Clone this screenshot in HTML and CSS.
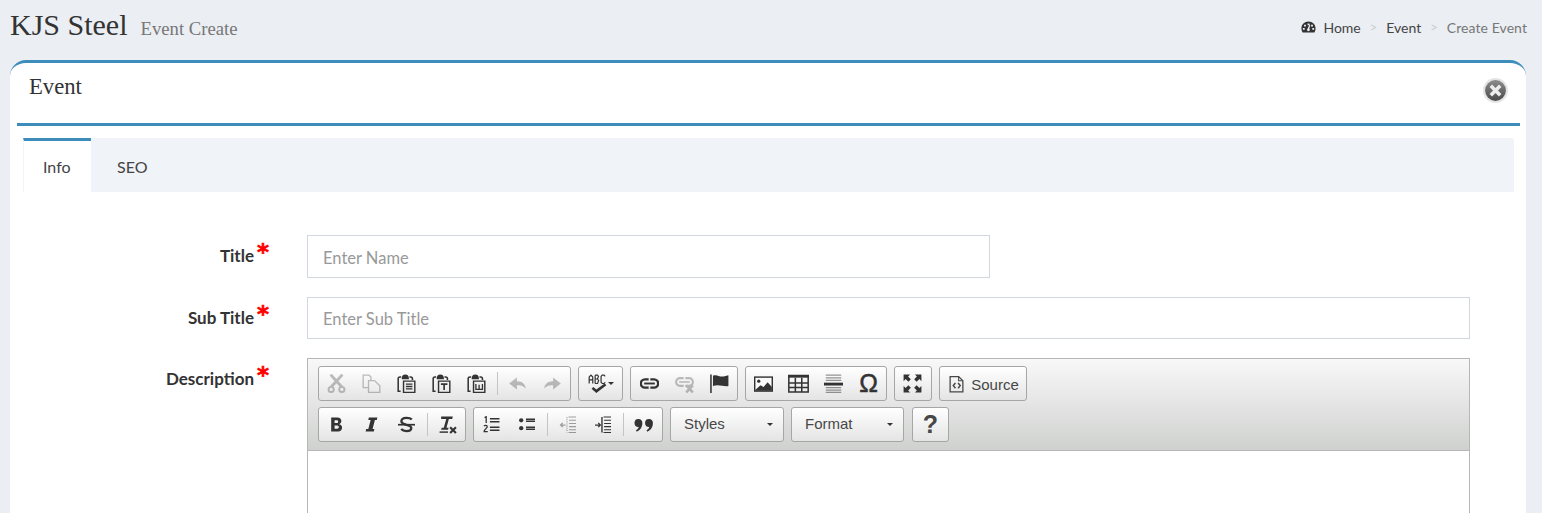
FILE: index.html
```html
<!DOCTYPE html>
<html lang="en">
<head>
<meta charset="utf-8">
<title>Event Create</title>
<link rel="stylesheet" href="styles.css">
</head>
<body>
<svg class="defs" width="0" height="0" aria-hidden="true">
  <symbol id="i-cut" viewBox="0 0 16 16"><path d="M3 0.5 L12.5 11 M13 0.5 L3.500 11" stroke="currentColor" stroke-width="2.4" fill="none"/><circle cx="3.500" cy="13" r="2.200" fill="none" stroke="currentColor" stroke-width="1.600"/><circle cx="12.500" cy="13" r="2.200" fill="none" stroke="currentColor" stroke-width="1.600"/></symbol>
  <symbol id="i-copy" viewBox="0 0 16 16"><path d="M6 11.500H1V1H6L7.500 2.500V5M5.500 5.500H10.500L15 10V15.500H5.500Z" fill="none" stroke="currentColor" stroke-width="1.100"/></symbol>
  <symbol id="i-paste" viewBox="0 0 16 16"><path d="M3 14.500H1V3.500Q1 2.500 2.500 2.500H3.500M10.500 2.500H11.500Q13 2.500 13 4V5" fill="none" stroke="currentColor" stroke-width="1.300"/><path d="M4 3.500Q4 0.800 7 0.500Q10 0.800 10 3.500V4.500H4Z" fill="currentColor"/><path d="M5.500 6H15V15.500H5.500Z" fill="none" stroke="currentColor" stroke-width="1.200"/><path d="M7.500 8.500H13M7.500 10.500H13M7.500 12.500H13" stroke="currentColor" stroke-width="1.200"/></symbol>
  <symbol id="i-pastet" viewBox="0 0 16 16"><path d="M3 14.500H1V3.500Q1 2.500 2.500 2.500H3.500M10.500 2.500H11.500Q13 2.500 13 4V5" fill="none" stroke="currentColor" stroke-width="1.300"/><path d="M4 3.500Q4 0.800 7 0.500Q10 0.800 10 3.500V4.500H4Z" fill="currentColor"/><path d="M5.500 6H15V15.500H5.500Z" fill="none" stroke="currentColor" stroke-width="1.200"/><path d="M7.500 8.500H13M10.200 8.500V13.500" stroke="currentColor" stroke-width="1.400"/></symbol>
  <symbol id="i-pastew" viewBox="0 0 16 16"><path d="M3 14.500H1V3.500Q1 2.500 2.500 2.500H3.500M10.500 2.500H11.500Q13 2.500 13 4V5" fill="none" stroke="currentColor" stroke-width="1.300"/><path d="M4 3.500Q4 0.800 7 0.500Q10 0.800 10 3.500V4.500H4Z" fill="currentColor"/><path d="M5.500 6H15V15.500H5.500Z" fill="none" stroke="currentColor" stroke-width="1.200"/><path d="M7.500 8.500V13H13V8.500M10.200 9V13" fill="none" stroke="currentColor" stroke-width="1.100"/></symbol>
  <symbol id="i-undo" viewBox="0 0 16 16"><path d="M7.500 3V6.200C12 6.200 14.500 8.500 15 12.500C13 10 11 9.500 7.500 9.500V13L1 8Z" fill="currentColor"/></symbol>
  <symbol id="i-redo" viewBox="0 0 16 16"><path d="M8.500 3V6.200C4 6.200 1.500 8.500 1 12.500C3 10 5 9.500 8.500 9.500V13L15 8Z" fill="currentColor"/></symbol>
  <symbol id="i-spell" viewBox="0 0 16 16"><path d="M1 8V2.500L2.500 1L4 2.500V8M1 5H4M6 1V8M6 1H8L8.800 2L8 4.200H6M8 4.200L9 5.500L8 8H6M14.500 2L13.500 1H12L11 2V7L12 8H13.500L14.500 7" fill="none" stroke="currentColor" stroke-width="1"/><path d="M4.500 11L7 13L14 8L15.500 9.500L7 16L3 12.500Z" fill="currentColor"/></symbol>
  <symbol id="i-link" viewBox="0 0 16 16"><path d="M7.300 4.500H4.200A3.500 3.500 0 0 0 4.200 11.500H7.300M8.700 4.500H11.800A3.500 3.500 0 0 1 11.800 11.500H8.700" fill="none" stroke="currentColor" stroke-width="2"/><path d="M3.500 8H12.500" stroke="currentColor" stroke-width="1.600"/></symbol>
  <symbol id="i-unlink" viewBox="0 0 16 16"><path d="M7.300 3.500H4.200A3 3 0 0 0 4.200 10H7.300M8.700 3.500H11.800A3 3 0 0 1 11.800 10H8.700" fill="none" stroke="currentColor" stroke-width="1.800"/><path d="M3.500 6.700H12.500" stroke="currentColor" stroke-width="1.300"/><path d="M9.500 9.500L15 15.500M15 9.500L9.500 15.500" stroke="currentColor" stroke-width="2.200"/></symbol>
  <symbol id="i-flag" viewBox="0 0 16 16"><path d="M0.800 0.500V16" stroke="currentColor" stroke-width="1.300"/><path d="M2.500 1.500C6 0 8 3 11.500 2L15.500 1V10C12 11 8 8.500 2.500 10Z" fill="currentColor"/></symbol>
  <symbol id="i-image" viewBox="0 0 16 16"><rect x="0" y="2" width="16" height="13" fill="currentColor"/><rect x="1.200" y="3.200" width="13.600" height="10.600" fill="#fafafa"/><circle cx="4" cy="6" r="1.400" fill="currentColor"/><path d="M1 13.500L5.500 9.500L8 11L11.500 7L15 11V14H1Z" fill="currentColor"/></symbol>
  <symbol id="i-table" viewBox="0 0 18 16"><rect x="0" y="0.500" width="18" height="2.500" fill="currentColor"/><path d="M0.700 1V15.300H17.300V1M0.700 7.500H17.300M0.700 11.500H17.300M6.300 3V15M11.800 3V15" fill="none" stroke="currentColor" stroke-width="1.300"/></symbol>
  <symbol id="i-hr" viewBox="0 0 16 16"><path d="M0 8.500H16" stroke="currentColor" stroke-width="2.400"/><path d="M1.500 1H14.500M1.500 3.200H14.500M1.500 5.400H14.500M1.500 11.500H14.500M1.500 13.500H14.500M1.500 15.500H14.500" stroke="currentColor" stroke-width="1" opacity=".5"/></symbol>
  <symbol id="i-max" viewBox="0 0 16 16"><path d="M0.500 0.500H6L4.300 2.200L6.600 4.500L4.500 6.600L2.200 4.300L0.500 6ZM15.500 0.500H10L11.700 2.200L9.400 4.500L11.500 6.600L13.800 4.300L15.500 6ZM0.500 15.500H6L4.300 13.800L6.600 11.500L4.500 9.400L2.200 11.700L0.500 10ZM15.500 15.500H10L11.700 13.800L9.400 11.500L11.500 9.400L13.800 11.700L15.500 10Z" fill="currentColor"/></symbol>
  <symbol id="i-source" viewBox="0 0 16 16"><path d="M2 1H10L14 5V15.500H2Z" fill="none" stroke="currentColor" stroke-width="1.200"/><path d="M10 1V5H14" fill="none" stroke="currentColor" stroke-width="1"/><path d="M7 7L5 9.500L7 12M9.500 7L11.500 9.500L9.500 12" fill="none" stroke="currentColor" stroke-width="1.400"/></symbol>
  <symbol id="i-bold" viewBox="0 0 16 16"><path d="M3 1.500H9C13.500 1.500 13.500 7 10.500 7.700C14.500 8.300 14.200 14.500 9.500 14.500H3ZM6.200 4V6.700H8.300C10 6.700 10 4 8.300 4ZM6.200 9V12H8.700C10.700 12 10.700 9 8.700 9Z" fill="currentColor" fill-rule="evenodd"/></symbol>
  <symbol id="i-italic" viewBox="0 0 16 16"><path d="M5.500 1.500H13.500L13 3.700H11.200L9 12.300H10.700L10.200 14.500H2.500L3 12.300H5L7.200 3.700H5Z" fill="currentColor"/></symbol>
  <symbol id="i-strike" viewBox="0 0 16 16"><path d="M13 3.300C12 2.200 10 1.700 8 1.700C5 1.700 3.200 3 3.200 5C3.200 9 12.500 7.500 12.500 11.300C12.500 13 10.800 14.200 8 14.200C6 14.200 4 13.500 3 12.300" fill="none" stroke="currentColor" stroke-width="2.200"/><path d="M0 8.200H16" stroke="currentColor" stroke-width="1.600"/></symbol>
  <symbol id="i-rfmt" viewBox="0 0 18 18"><path d="M3 1.500H14L13.500 3.700H10.300L8 12H10L9.500 14H3L3.500 12H5.500L7.800 3.700H3Z" fill="currentColor"/><path d="M1.500 16.200H9.500" stroke="currentColor" stroke-width="1.400"/><path d="M11.500 11.500L17 17M17 11.500L11.500 17" stroke="currentColor" stroke-width="2"/></symbol>
  <symbol id="i-ol" viewBox="0 0 16 16"><path d="M6.500 2.500H15.500M6.500 5.500H15.500M6.500 10.500H15.500M6.500 13.500H15.500" stroke="currentColor" stroke-width="1.400"/><path d="M1.500 1.500L3 0.700V6.500M1 9.500C1.500 8.500 4 8.500 4 10C4 11.500 1 12.500 1 14.800H4.500" fill="none" stroke="currentColor" stroke-width="1.200"/></symbol>
  <symbol id="i-ul" viewBox="0 0 16 16"><circle cx="3" cy="4" r="2" fill="currentColor"/><circle cx="3" cy="11.500" r="2" fill="currentColor"/><path d="M7.500 3H16.500M7.500 5H16.500M7.500 10.500H16.500M7.500 12.500H16.500" stroke="currentColor" stroke-width="1.400"/></symbol>
  <symbol id="i-outdent" viewBox="0 0 16 16"><path d="M9 1H16M9.500 4H16M9.500 7H16M9.500 10H16M9.500 13H16M9 15.500H16" stroke="currentColor" stroke-width="1"/><path d="M7.500 1V15.500" stroke="currentColor" stroke-width="1" stroke-dasharray="1 1"/><path d="M6 8.500H1.500M3.500 6.500L1.500 8.500L3.500 10.500" fill="none" stroke="currentColor" stroke-width="1.200"/></symbol>
  <symbol id="i-indent" viewBox="0 0 16 16"><path d="M9 1H16M9.500 4H16M9.500 7H16M9.500 10H16M9.500 13H16M9 15.500H16" stroke="currentColor" stroke-width="1"/><path d="M7.500 1V15.500" stroke="currentColor" stroke-width="1.300"/><path d="M1 8.500H6M4 6.500L6 8.500L4 10.500" fill="none" stroke="currentColor" stroke-width="1.200"/></symbol>
  <symbol id="i-quote" viewBox="0 0 18 14"><path d="M4 1.500A3.500 3.500 0 0 1 7.500 5.500C7.500 9 5.500 12 2.500 13L1.800 11.700C3.200 11 4 10 4.200 8.800A3.500 3.500 0 0 1 4 1.500ZM13.500 1.500A3.500 3.500 0 0 1 17 5.500C17 9 15 12 12 13L11.300 11.700C12.700 11 13.500 10 13.700 8.800A3.500 3.500 0 0 1 13.500 1.500Z" fill="currentColor"/></symbol>
</svg>

<header class="page-head">
  <div class="page-title"><h1>KJS Steel</h1><small>Event Create</small></div>
  <nav class="crumbs">
    <svg class="gauge" viewBox="0 0 16 13" aria-hidden="true"><path fill-rule="evenodd" d="M8 0.500C3.600 0.500 0.300 3.900 0.300 8.200C0.300 9.800 0.800 11.200 1.600 12.500H14.400C15.200 11.200 15.700 9.800 15.700 8.200C15.700 3.900 12.400 0.500 8 0.500ZM7 2.600H9V4.600H7ZM3.200 4H5.200V6H3.200ZM1.900 7.500H3.900V9.500H1.900ZM10.800 4H12.800V6H10.800ZM12.100 7.500H14.100V9.500H12.100ZM6.900 8.400L9.200 3.800L10 4.200L8.900 8.400C9.900 9.400 9.200 11.200 8 11.200C6.600 11.200 6 9.400 6.900 8.400Z"/></svg>
    <a class="crumb">Home</a><span class="sep">&gt;</span><a class="crumb">Event</a><span class="sep">&gt;</span><span class="crumb-now">Create Event</span>
  </nav>
</header>

<main class="card">
  <div class="card-head">
    <h2>Event</h2>
    <span class="close-btn" aria-label="Close"><svg viewBox="0 0 24 24" width="25" height="25" aria-hidden="true"><defs><linearGradient id="cg" x1="0" y1="0" x2="0" y2="1"><stop offset="0" stop-color="#8c8c8c"/><stop offset="1" stop-color="#4a4a4a"/></linearGradient></defs><circle cx="12" cy="12" r="12" fill="#e4e4e4"/><circle cx="12" cy="12" r="10" fill="url(#cg)"/><path d="M7.500 7.500L16.500 16.500M16.500 7.500L7.500 16.500" stroke="#ececec" stroke-width="3.400"/></svg></span>
  </div>
  <div class="tabs-panel">
    <div class="tabs">
      <a class="tab tab-active">Info</a>
      <a class="tab">SEO</a>
    </div>
    <form class="form">
      <div class="row row-title">
        <label class="lbl">Title<b class="req">*</b></label>
        <input class="inp inp-short" placeholder="Enter Name">
      </div>
      <div class="row row-sub">
        <label class="lbl">Sub Title<b class="req">*</b></label>
        <input class="inp" placeholder="Enter Sub Title">
      </div>
      <div class="row">
        <label class="lbl">Description<b class="req">*</b></label>
        <div class="editor">
          <div class="toolbar">
            <div class="tb-row">
              <div class="group">
                <a class="btn off"><svg><use href="#i-cut"/></svg></a>
                <a class="btn off"><svg><use href="#i-copy"/></svg></a>
                <a class="btn"><svg><use href="#i-paste"/></svg></a>
                <a class="btn"><svg><use href="#i-pastet"/></svg></a>
                <a class="btn"><svg><use href="#i-pastew"/></svg></a>
                <i class="div"></i>
                <a class="btn off"><svg><use href="#i-undo"/></svg></a>
                <a class="btn off"><svg><use href="#i-redo"/></svg></a>
              </div>
              <div class="group"><a class="btn btn-spell"><svg><use href="#i-spell"/></svg><i class="caret"></i></a></div>
              <div class="group group-link">
                <a class="btn"><svg><use href="#i-link"/></svg></a>
                <a class="btn off"><svg><use href="#i-unlink"/></svg></a>
                <a class="btn"><svg><use href="#i-flag"/></svg></a>
              </div>
              <div class="group">
                <a class="btn"><svg><use href="#i-image"/></svg></a>
                <a class="btn"><svg class="wide"><use href="#i-table"/></svg></a>
                <a class="btn"><svg><use href="#i-hr"/></svg></a>
                <a class="btn omega">Ω</a>
              </div>
              <div class="group group-max"><a class="btn"><svg><use href="#i-max"/></svg></a></div>
              <div class="group"><a class="btn btn-text"><svg><use href="#i-source"/></svg><span>Source</span></a></div>
            </div>
            <div class="tb-row">
              <div class="group">
                <a class="btn"><svg class="fmt"><use href="#i-bold"/></svg></a>
                <a class="btn"><svg class="fmt"><use href="#i-italic"/></svg></a>
                <a class="btn"><svg class="fmt"><use href="#i-strike"/></svg></a>
                <i class="div"></i>
                <a class="btn"><svg><use href="#i-rfmt"/></svg></a>
              </div>
              <div class="group">
                <a class="btn"><svg class="fmt"><use href="#i-ol"/></svg></a>
                <a class="btn"><svg class="fmt"><use href="#i-ul"/></svg></a>
                <i class="div"></i>
                <a class="btn off2"><svg class="fmt"><use href="#i-outdent"/></svg></a>
                <a class="btn"><svg class="fmt"><use href="#i-indent"/></svg></a>
                <i class="div"></i>
                <a class="btn btn-quote"><svg class="quote"><use href="#i-quote"/></svg></a>
              </div>
              <div class="group combo combo-styles"><span>Styles</span><i class="caret"></i></div>
              <div class="group combo combo-format"><span>Format</span><i class="caret"></i></div>
              <div class="group group-help"><a class="btn help">?</a></div>
            </div>
          </div>
          <div class="edit-area"></div>
        </div>
      </div>
    </form>
  </div>
</main>
</body>
</html>
```

FILE: styles.css
```css
* { box-sizing: border-box; }
html, body { margin: 0; height: 513px; overflow: hidden; }
body { background: #ebeef3; font-family: Lato, "Noto Sans", sans-serif; color: #333; }
.defs { position: absolute; }

.page-head { display: flex; justify-content: space-between; align-items: flex-start; height: 60px; padding: 0 15px 0 10px; }
.page-title { display: flex; align-items: baseline; gap: 13px; padding-top: 8px; font-family: "Liberation Serif", serif; }
.page-title h1 { margin: 0; font-size: 30px; font-weight: 400; line-height: 34px; color: #333; }
.page-title small { font-size: 18.7px; color: #777; }
.crumbs { display: flex; align-items: center; height: 20px; margin-top: 17px; font-size: 14px; color: #444; }
.gauge { width: 15px; height: 12px; margin-right: 7px; fill: #333; }
.sep { margin: 0 9px; color: #ccc; font-size: 13px; }
.crumb-now { color: #777; letter-spacing: .08px; }

.card { margin: 0 16px 0 10px; height: 460px; background: #fff; border-top: 3px solid #3c8dbc; border-radius: 16px 16px 0 0; padding: 0 6px 0 7px; }
.card-head { display: flex; justify-content: space-between; height: 63px; border-bottom: 3px solid #3c8dbc; padding: 10px 0 0 12px; }
.card-head h2 { margin: 0; font: 400 22.7px/28px "Liberation Serif", serif; color: #333; }
.close-btn { width: 25px; height: 25px; margin: 5px 0 0; transform: translateX(-12px); }

.tabs-panel { margin: 12px 6px 0; }
.tabs { display: flex; height: 54px; background: #f0f3f7; border-radius: 3px 3px 0 0; }
.tab { padding: 19px 20px 0; font-size: 16px; line-height: 20px; color: #444; width: 68px; }
.tab-active { background: #fff; border-top: 3px solid #3c8dbc; padding-top: 16px; padding-left: 19px; border-left: 1px solid #f4f4f4; }
.tab + .tab { width: 82px; padding-left: 26px; }

.form { padding-top: 43px; }
.row { display: flex; align-items: flex-start; }
.row-title { margin-bottom: 19px; }
.row-sub { margin-bottom: 19px; }
.lbl { display: flex; justify-content: flex-end; width: 246px; margin-right: 38px; font-weight: 700; font-size: 17px; line-height: 20px; padding-top: 11px; color: #333; white-space: nowrap; }
.req { color: #f00; font: 700 23px/20px "DejaVu Sans", sans-serif; width: 15px; padding-left: 3px; height: 20px; margin-top: -4px; -webkit-text-stroke: .6px #f00; }
.inp { width: 1163px; height: 42px; border: 1px solid #d2d6de; padding: 2px 15px 0; font: 16.500px Lato, "Noto Sans", sans-serif; color: #333; background: #fff; outline: 0; }
.inp::placeholder { color: #999; opacity: 1; }
.inp-short { width: 683px; height: 43px; }

.editor { width: 1163px; height: 300px; border: 1px solid #b6b6b6; }
.toolbar { height: 92px; padding: 7px 10px 0; background: linear-gradient(#f8f8f8, #cfd1cf); border-bottom: 1px solid #b6b6b6; display: flex; flex-direction: column; gap: 6px; }
.tb-row { display: flex; gap: 7px; height: 35px; }
.group { display: flex; align-items: center; height: 100%; border: 1px solid #a6a6a6; border-radius: 3px; background: linear-gradient(#fff, #e4e4e4); color: #333; }
.group-link { padding-left: 1px; }
.group-max { padding-right: 1px; }
.group-help { margin-left: 1px; }
.btn { width: 35px; height: 100%; display: flex; align-items: center; justify-content: center; color: #333; }
.btn svg { width: 19px; height: 19px; flex: none; }
.btn svg.wide { width: 21px; height: 19px; }
.btn svg.fmt { width: 17px; height: 17px; }
.btn svg.quote { width: 20px; height: 16px; }
.btn-quote { width: 36px; }
.off { opacity: .3; }
.off2 { opacity: .45; }
.div { width: 1px; height: 23px; margin: 0 2px 0 3px; background: #c4c4c4; }
.btn-spell { width: 43px; gap: 1px; }
.caret { width: 0; height: 0; border: 3px solid transparent; border-top-color: #333; border-bottom: 0; }
.omega { font: 400 25px "Liberation Sans", sans-serif; color: #333; -webkit-text-stroke: .5px #333; }
.help { font: 700 25px "Liberation Sans", sans-serif; color: #474747; }
.btn-text { width: 86px; gap: 6px; font: 15px/1 "Liberation Sans", sans-serif; color: #474747; padding-left: 1px; }
.btn-text span { padding-top: 2px; }
.btn-text svg { width: 17px; height: 18px; }
.combo { justify-content: space-between; padding: 0 10px 2px 13px; font: 15px/1 "Liberation Sans", sans-serif; color: #474747; }
.combo .caret { margin-top: 2px; }
.combo-styles { width: 114px; }
.combo-format { width: 113px; }
.edit-area { height: 200px; background: #fff; }
```
